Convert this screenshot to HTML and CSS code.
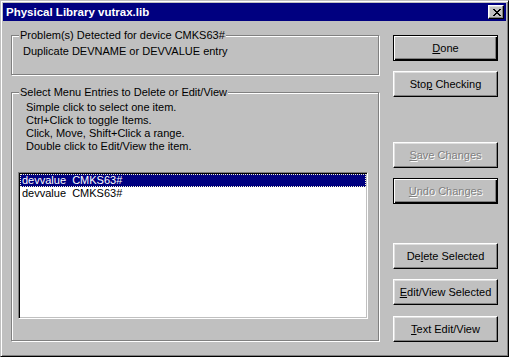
FILE: index.html
```html
<!DOCTYPE html>
<html lang="en">
<head>
  <meta charset="UTF-8">
  <title>Physical Library vutrax.lib</title>
  <link rel="stylesheet" href="styles.css">
</head>
<body>
  <div class="window">
    <div class="titlebar">
      <span class="title">Physical Library vutrax.lib</span>
      <button class="close-btn" aria-label="Close">
        <svg width="8" height="7" viewBox="0 0 8 7">
          <path d="M0 0h2v1h1v1h2v-1h1v-1h2v1h-1v1h-1v1h-1v1h1v1h1v1h1v1h-2v-1h-1v-1h-2v1h-1v1h-2v-1h1v-1h1v-1h1v-1h-1v-1h-1v-1h-1z" fill="#000"/>
        </svg>
      </button>
    </div>

    <div class="client">
      <div class="left-col">
        <div class="group problem-group">
          <span class="group-label">Problem(s) Detected for device CMKS63#</span>
          <p class="problem-text">Duplicate DEVNAME or DEVVALUE entry</p>
        </div>

        <div class="group entries-group">
          <span class="group-label">Select Menu Entries to Delete or Edit/View</span>
          <p class="help-text">
            Simple click to select one item.<br>
            Ctrl+Click to toggle Items.<br>
            Click, Move, Shift+Click a range.<br>
            Double click to Edit/View the item.
          </p>
          <div class="listbox">
            <div class="list-item selected">devvalue  CMKS63#</div>
            <div class="list-item">devvalue  CMKS63#</div>
          </div>
        </div>
      </div>

      <div class="right-col">
        <button class="btn default"><u>D</u>one</button>
        <button class="btn gap-sm">Sto<u>p</u> Checking</button>
        <button class="btn disabled gap-lg"><u>S</u>ave Changes</button>
        <button class="btn default disabled gap-sm"><u>U</u>ndo Changes</button>
        <button class="btn gap-md">De<u>l</u>ete Selected</button>
        <button class="btn gap-sm"><u>E</u>dit/View Selected</button>
        <button class="btn gap-sm2"><u>T</u>ext Edit/View</button>
      </div>
    </div>
  </div>
</body>
</html>
```

FILE: styles.css
```css
body {
  margin: 0;
  background-color: #c0c0c0;
  font-family: "Liberation Sans", Arial, sans-serif;
  font-size: 11px;
  line-height: 13px;
  color: #000;
}

.window {
  width: 509px;
  height: 357px;
  box-sizing: border-box;
  padding: 2px;
  background-color: #c0c0c0;
  border: 1px solid;
  border-color: #c0c0c0 #000 #000 #c0c0c0;
  box-shadow: inset 1px 1px #fff, inset -1px -1px #808080;
}

/* Title bar */
.titlebar {
  height: 18px;
  display: flex;
  align-items: center;
  justify-content: space-between;
  padding: 0 2px 0 3px;
  background-color: #000080;
}

.title {
  color: #fff;
  font-weight: bold;
  font-size: 11.5px;
}

.close-btn {
  width: 16px;
  height: 14px;
  padding: 0;
  display: flex;
  align-items: center;
  justify-content: center;
  background-color: #c0c0c0;
  border: 1px solid;
  border-color: #fff #000 #000 #fff;
  box-shadow: inset -1px -1px #808080, inset 1px 1px #dfdfdf;
}

.close-btn svg {
  display: block;
  margin-left: 1px;
}

/* Client area */
.client {
  display: flex;
  padding: 14px 0 0 8px;
}

.left-col {
  width: 368px;
}

.group {
  position: relative;
  box-sizing: border-box;
  border: 1px solid #808080;
  box-shadow: inset 1px 1px #fff, 1px 1px #fff;
}

.group-label {
  position: absolute;
  top: -7px;
  left: 7px;
  padding: 0 1px;
  background-color: #c0c0c0;
  white-space: nowrap;
}

.problem-group {
  height: 40px;
  padding: 9px 0 0 11px;
}

.problem-text {
  margin: 0;
}

.entries-group {
  height: 249px;
  margin-top: 17px;
  padding: 8px 0 0 6px;
}

.help-text {
  margin: 0 0 19px 8px;
}

/* List box */
.listbox {
  width: 350px;
  height: 147px;
  box-sizing: border-box;
  background-color: #fff;
  border: 1px solid;
  border-color: #808080 #fff #fff #808080;
  box-shadow: inset 1px 1px #000, inset -1px -1px #c0c0c0;
  padding: 1px;
}

.list-item {
  height: 13px;
  box-sizing: border-box;
  padding-left: 2px;
  white-space: pre;
  line-height: 12px;
}

.list-item.selected {
  background-color: #000080;
  color: #fff;
  border: 1px dotted #f4f4d0;
  padding-left: 1px;
  line-height: 11px;
}

/* Buttons */
.right-col {
  display: flex;
  flex-direction: column;
  margin-left: 14px;
}

.btn {
  width: 105px;
  height: 26px;
  box-sizing: border-box;
  padding: 0;
  font-family: "Liberation Sans", Arial, sans-serif;
  font-size: 11px;
  color: #000;
  background-color: #c0c0c0;
  border: 1px solid;
  border-color: #fff #000 #000 #fff;
  box-shadow: inset -1px -1px #808080, inset 1px 1px #dfdfdf;
}

.btn.default {
  border-color: #000;
  box-shadow: inset 1px 1px #fff, inset -1px -1px #000, inset -2px -2px #808080;
}

.btn.disabled {
  color: #808080;
  text-shadow: 1px 1px #fff;
}

.gap-sm {
  margin-top: 10px;
}

.gap-sm2 {
  margin-top: 11px;
}

.gap-md {
  margin-top: 39px;
}

.gap-lg {
  margin-top: 45px;
}
```
